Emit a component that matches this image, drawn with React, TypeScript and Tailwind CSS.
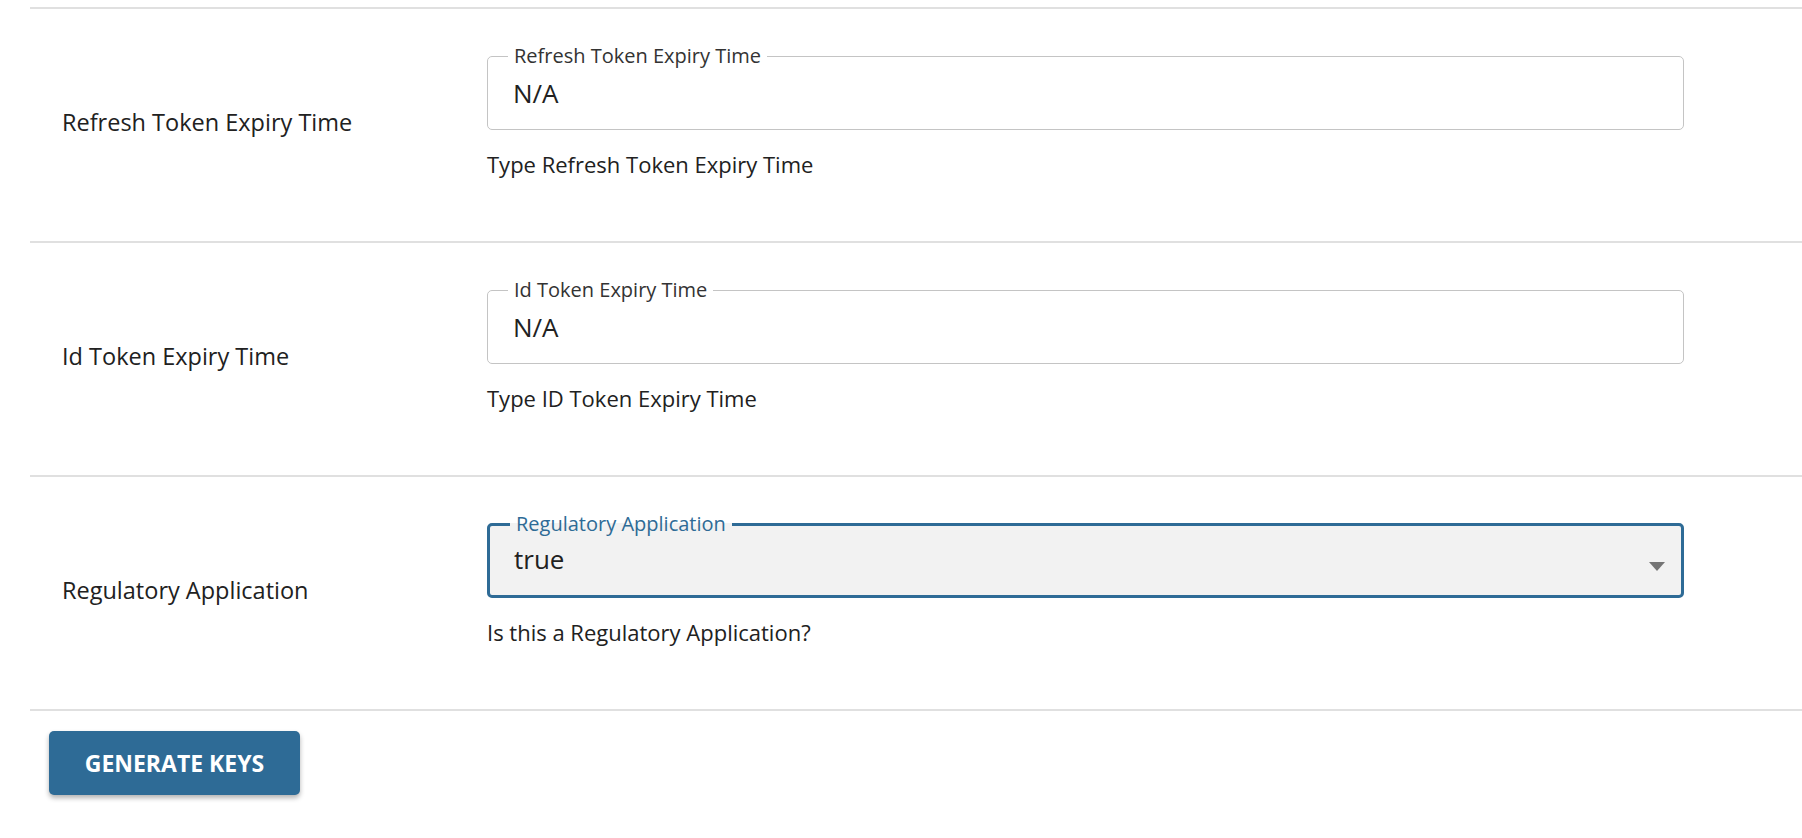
export default function App() {
  const rows = [
    { label: "Refresh Token Expiry Time", legend: "Refresh Token Expiry Time", value: "N/A", help: "Type Refresh Token Expiry Time", select: false },
    { label: "Id Token Expiry Time", legend: "Id Token Expiry Time", value: "N/A", help: "Type ID Token Expiry Time", select: false },
    { label: "Regulatory Application", legend: "Regulatory Application", value: "true", help: "Is this a Regulatory Application?", select: true },
  ];
  return (
    <div className="w-[1802px] h-[838px] bg-white overflow-hidden pt-[7px]" style={{ fontFamily: '"Open Sans", sans-serif' }}>
      {rows.map((r) => (
        <div key={r.label} className="ml-[30px] border-t-2 border-[#e0e0e0] h-[234px] flex">
          <div className="w-[457px] pl-[32px] pt-[96px] text-[23.5px] text-[#212121]">{r.label}</div>
          <div className="w-[1197px] pt-[46px]">
            <fieldset
              className={`relative h-[86px] -mt-[11px] rounded-[5px] px-[26px] ${r.select ? "border-[3px] border-[#2e6b96] bg-[#f2f2f2]" : "border border-[#c4c4c4]"}`}
            >
              <legend className={`px-[6px] -ml-[6px] text-[20px] leading-[24px] ${r.select ? "text-[#2e6b96]" : "text-[#333]"}`}>{r.legend}</legend>
              <div className={`text-[26px] text-[#212121] ${r.select ? "pt-[4px] -ml-[2px]" : "pt-[6px] -ml-[1px]"}`}>{r.value}</div>
              {r.select && (
                <svg className="absolute right-[16px] top-[26px]" width="16" height="10" viewBox="0 0 16 10">
                  <path d="M0 0 L16 0 L8 9 Z" fill="#757575" />
                </svg>
              )}
            </fieldset>
            <div className="mt-[18px] text-[22px] text-[#212121]">{r.help}</div>
          </div>
        </div>
      ))}
      <div className="ml-[30px] border-t-2 border-[#e0e0e0] pt-[20px] pl-[19px]">
        <button className="w-[251px] h-[64px] rounded-[5px] bg-[#2e6b96] text-white font-bold text-[23px] shadow-[0_3px_5px_rgba(0,0,0,0.3)]">
          GENERATE KEYS
        </button>
      </div>
    </div>
  );
}
